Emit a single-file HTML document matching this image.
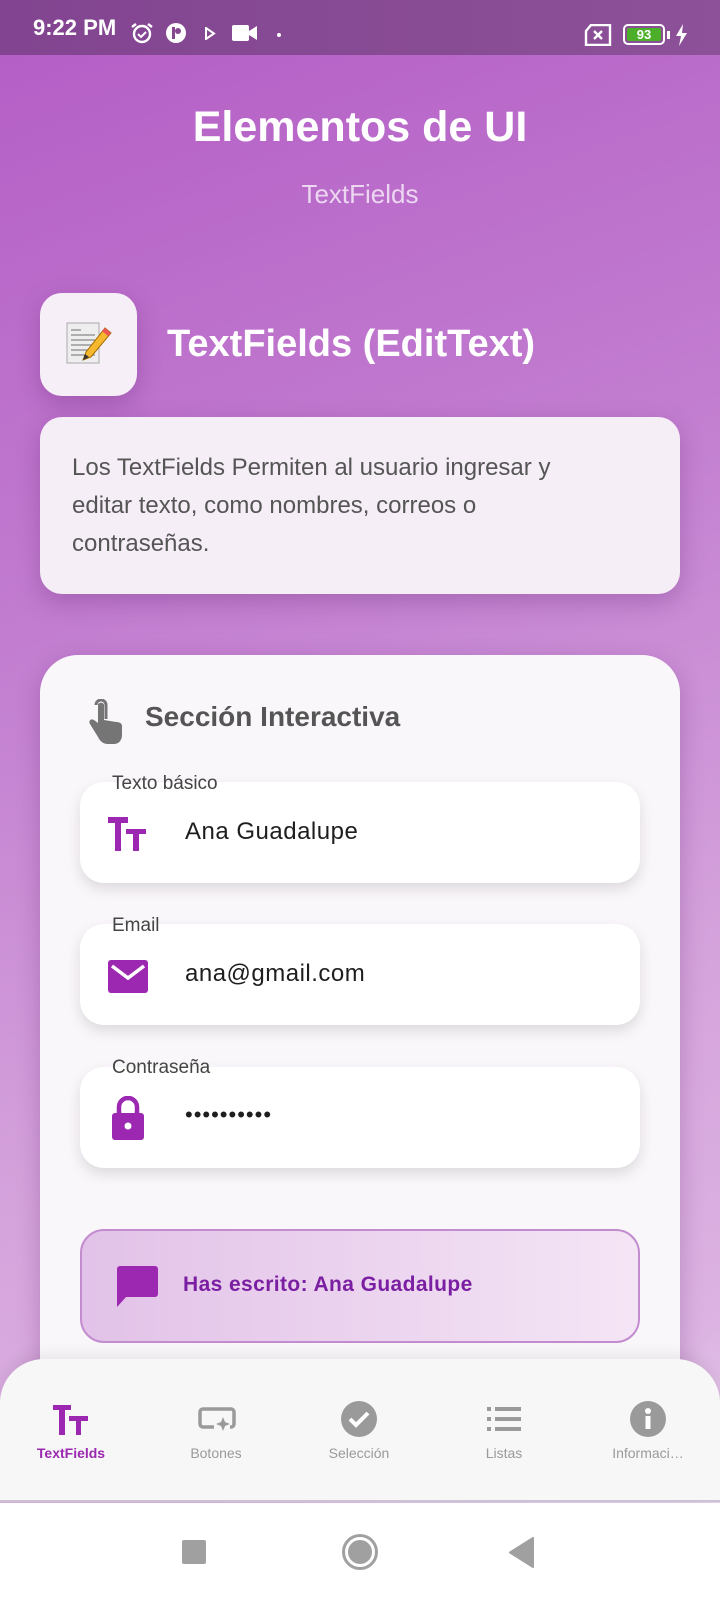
<!DOCTYPE html>
<html><head><meta charset="utf-8"><style>
*{margin:0;padding:0;box-sizing:border-box}
body{width:720px;height:1600px;overflow:hidden;position:relative;font-family:"Liberation Sans",sans-serif;background:linear-gradient(160deg,#b35cc5 0%,#c27dd0 35%,#d5a3dc 65%,#dcb3e2 85%,#efe0f2 100%)}
.status{position:absolute;left:0;top:0;width:720px;height:55px;background:linear-gradient(90deg,#824490,#8c5198);color:#fff}
.abs{position:absolute}
.card{position:absolute;background:#f6eff7;box-shadow:0 8px 24px rgba(80,20,90,.25)}
.field{position:absolute;left:80px;width:560px;height:101px;background:#fff;border-radius:24px;box-shadow:0 6px 14px rgba(0,0,0,.12)}
.lbl{position:absolute;left:112px;font-size:19px;color:#444;line-height:1}
.val{position:absolute;left:105px;font-size:24px;color:#1e1e1e;letter-spacing:.5px}
.nav{position:absolute;left:0;top:1359px;width:720px;height:143px;background:#f7f7f7;border-radius:44px 44px 0 0;border-bottom:2px solid #cbc3d3;box-shadow:0 -4px 16px rgba(0,0,0,.08)}
.ni{position:absolute;top:0;width:130px;text-align:center}
.ni span{position:absolute;top:86px;left:0;width:130px;font-size:14px;color:#9a9a9a}
</style></head><body>
<div class="status">
 <div class="abs" style="left:33px;top:15px;font-size:22px;font-weight:bold">9:22 PM</div>
 <svg class="abs" style="left:130px;top:21px" width="24" height="24" viewBox="0 0 24 24"><circle cx="12" cy="13" r="8" fill="none" stroke="#fff" stroke-width="2.4"/><path d="M8 13l3 3 5-5" fill="none" stroke="#fff" stroke-width="2"/><path d="M2 6l4-3M22 6l-4-3" stroke="#fff" stroke-width="2.4"/></svg>
 <svg class="abs" style="left:165px;top:22px" width="22" height="22" viewBox="0 0 22 22"><circle cx="11" cy="11" r="10" fill="#fff"/><rect x="7" y="5" width="3" height="12" fill="#86488f"/><circle cx="13" cy="9" r="3" fill="#86488f"/></svg>
 <svg class="abs" style="left:204px;top:27px" width="12" height="13" viewBox="0 0 12 13"><path d="M2 1l8 5.5L2 12z" fill="none" stroke="#fff" stroke-width="2"/></svg>
 <svg class="abs" style="left:232px;top:25px" width="26" height="16" viewBox="0 0 26 16"><rect x="0" y="0" width="17" height="16" rx="2" fill="#fff"/><path d="M17 6l8-5v14l-8-5z" fill="#fff"/></svg>
 <div class="abs" style="left:277px;top:33px;width:4px;height:4px;border-radius:2px;background:#fff"></div>
 <svg class="abs" style="left:584px;top:24px" width="28" height="22" viewBox="0 0 28 22"><path d="M7 1h19v20H2V7z" fill="none" stroke="#fff" stroke-width="2.4"/><path d="M10 7l8 8M18 7l-8 8" stroke="#fff" stroke-width="2.4"/></svg>
 <div class="abs" style="left:623px;top:24px;width:42px;height:21px;border:2.5px solid #fff;border-radius:5px;padding:2px"><div style="background:#4caf2a;height:100%;border-radius:2px;color:#fff;font-size:13px;font-weight:bold;text-align:center;line-height:13px">93</div></div>
 <div class="abs" style="left:667px;top:31px;width:3px;height:8px;background:#fff"></div>
 <svg class="abs" style="left:674px;top:24px" width="14" height="22" viewBox="0 0 14 22"><path d="M9 0L2 12h5l-2 10 8-13H8z" fill="#fff"/></svg>
</div>

<div class="abs" style="left:0;width:720px;top:103px;text-align:center;font-size:43px;font-weight:bold;color:#fff">Elementos de UI</div>
<div class="abs" style="left:0;width:720px;top:179px;text-align:center;font-size:26px;color:rgba(255,255,255,.72)">TextFields</div>

<div class="card" style="left:40px;top:293px;width:97px;height:103px;border-radius:22px"></div>
<svg class="abs" style="left:65px;top:320px" width="48" height="48" viewBox="0 0 48 48"><rect x="2" y="3" width="32" height="40" fill="#eee" stroke="#aaa"/><g stroke="#999" stroke-width="1.5"><path d="M6 10h10M6 15h24M6 20h24M6 25h24M6 30h24M6 35h24"/></g><path d="M40 8l6 5-20 24-8 3 3-8z" fill="#f5b82e" stroke="#a36a00"/><path d="M40 8l6 5-3 3-6-5z" fill="#e55"/><path d="M18 40l2-6 4 3z" fill="#333"/></svg>
<div class="abs" style="left:167px;top:323px;font-size:38px;font-weight:bold;color:#fff">TextFields (EditText)</div>

<div class="card" style="left:40px;top:417px;width:640px;height:177px;border-radius:22px;background:#f6eef7"></div>
<div class="abs" style="left:72px;top:449px;width:540px;font-size:24px;line-height:38px;color:#555">Los TextFields Permiten al usuario ingresar y editar texto, como nombres, correos o contraseñas.</div>

<div class="card" style="left:40px;top:655px;width:640px;height:760px;border-radius:38px;background:#faf7fb"></div>
<svg class="abs" style="left:86px;top:699px" width="36" height="46" viewBox="0 0 36 46"><path d="M10 6a5 5 0 0 1 10 0v14" fill="none" stroke="#757575" stroke-width="3"/><path d="M12 6v18l-4-3c-3-2-6 1-4 4l8 13c2 4 5 7 10 7h6c5 0 8-4 8-9V27c0-3-3-4-6-4l-12-2V6c0-3-6-3-6 0z" fill="#757575"/></svg>
<div class="abs" style="left:145px;top:701px;font-size:28px;font-weight:bold;color:#555">Sección Interactiva</div>

<div class="field" style="top:782px"></div>
<div class="lbl" style="top:774px">Texto básico</div>
<svg class="abs" style="left:108px;top:817px" width="40" height="34" viewBox="0 0 40 34"><path d="M0 0h20v6h-7v28H7V6H0z" fill="#9c27b0"/><path d="M18 12h20v5h-7v17h-6V17h-7z" fill="#9c27b0"/></svg>
<div class="val" style="left:185px;top:818px">Ana Guadalupe</div>

<div class="field" style="top:924px"></div>
<div class="lbl" style="top:916px">Email</div>
<svg class="abs" style="left:108px;top:960px" width="40" height="33" viewBox="0 0 40 33"><rect width="40" height="33" rx="3" fill="#9c27b0"/><path d="M4 6l16 12 16-12" fill="none" stroke="#fff" stroke-width="3.5"/></svg>
<div class="val" style="left:185px;top:960px">ana@gmail.com</div>

<div class="field" style="top:1067px"></div>
<div class="lbl" style="top:1058px">Contraseña</div>
<svg class="abs" style="left:111px;top:1096px" width="34" height="44" viewBox="0 0 34 44"><path d="M8 18V11a9 9 0 0 1 18 0v7" fill="none" stroke="#9c27b0" stroke-width="4.5"/><rect x="1" y="17" width="32" height="27" rx="3" fill="#9c27b0"/><circle cx="17" cy="30" r="3.5" fill="#fff"/></svg>
<div class="val" style="left:185px;top:1102px;font-size:22px;letter-spacing:1px">••••••••••</div>

<div class="abs" style="left:80px;top:1229px;width:560px;height:114px;border-radius:24px;border:2px solid #c38ccf;background:linear-gradient(90deg,#e2c2e8,#f4e5f5)"></div>
<svg class="abs" style="left:117px;top:1266px" width="41" height="41" viewBox="0 0 41 41"><path d="M3 0h35a3 3 0 0 1 3 3v25a3 3 0 0 1-3 3H9l-9 10V3a3 3 0 0 1 3-3z" fill="#9c27b0"/></svg>
<div class="abs" style="left:183px;top:1273px;font-size:21px;color:#7b1fa2;font-weight:bold;letter-spacing:.4px">Has escrito: Ana Guadalupe</div>

<div class="nav">
 <div class="ni" style="left:6px"><svg class="abs" style="left:47px;top:46px" width="36" height="30" viewBox="0 0 36 30"><path d="M0 0h18v5h-6v25H6V5H0z" fill="#9c27b0"/><path d="M16 11h19v5h-7v14h-5V16h-7z" fill="#9c27b0"/></svg><span style="color:#9c27b0;font-weight:bold">TextFields</span></div>
 <div class="ni" style="left:151px"><svg class="abs" style="left:47px;top:48px" width="38" height="28" viewBox="0 0 38 28"><path d="M16 20H5a3 3 0 0 1-3-3V5a3 3 0 0 1 3-3h28a3 3 0 0 1 3 3v12a3 3 0 0 1-3 3h-1" fill="none" stroke="#9a9a9a" stroke-width="3.5"/><path d="M25 10l2 5 5 2-5 2-2 5-2-5-5-2 5-2z" fill="#9a9a9a"/></svg><span>Botones</span></div>
 <div class="ni" style="left:294px"><svg class="abs" style="left:47px;top:42px" width="36" height="36" viewBox="0 0 36 36"><circle cx="18" cy="18" r="18" fill="#9a9a9a"/><path d="M9 18l6 6 12-12" fill="none" stroke="#fff" stroke-width="4"/></svg><span>Selección</span></div>
 <div class="ni" style="left:439px"><svg class="abs" style="left:48px;top:48px" width="34" height="24" viewBox="0 0 34 24"><g fill="#9a9a9a"><rect x="0" y="0" width="4" height="4"/><rect x="0" y="10" width="4" height="4"/><rect x="0" y="20" width="4" height="4"/><rect x="8" y="0" width="26" height="4"/><rect x="8" y="10" width="26" height="4"/><rect x="8" y="20" width="26" height="4"/></g></svg><span>Listas</span></div>
 <div class="ni" style="left:583px"><svg class="abs" style="left:47px;top:42px" width="36" height="36" viewBox="0 0 36 36"><circle cx="18" cy="18" r="18" fill="#9a9a9a"/><rect x="15.5" y="15" width="5" height="13" fill="#fff"/><circle cx="18" cy="10" r="3" fill="#fff"/></svg><span>Informaci…</span></div>
</div>

<div class="abs" style="left:0;top:1503px;width:720px;height:97px;background:#fff"></div>
<div class="abs" style="left:182px;top:1540px;width:24px;height:24px;background:#a0a0a0;border-radius:2px"></div>
<div class="abs" style="left:342px;top:1534px;width:36px;height:36px;border:3.5px solid #a0a0a0;border-radius:50%;padding:3px"><div style="width:100%;height:100%;border-radius:50%;background:#a0a0a0"></div></div>
<svg class="abs" style="left:509px;top:1537px" width="26" height="31" viewBox="0 0 26 31"><path d="M24 1v29L1 15.5z" fill="#a0a0a0" stroke="#a0a0a0" stroke-linejoin="round" stroke-width="2"/></svg>
</body></html>
